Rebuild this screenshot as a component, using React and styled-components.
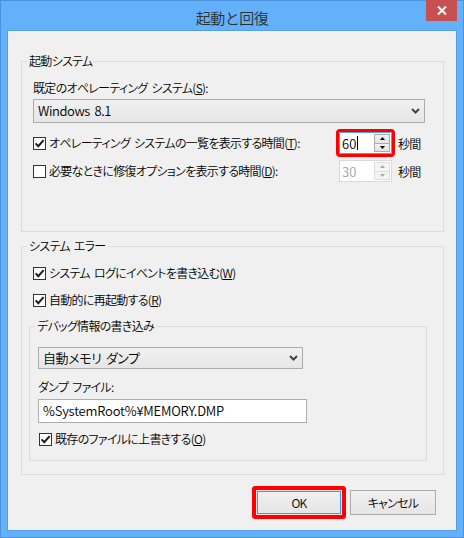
import styled, { createGlobalStyle } from 'styled-components';

const GlobalStyle = createGlobalStyle`
  * {
    box-sizing: border-box;
  }
  body {
    margin: 0;
    background: #fff;
    font-family: 'Noto Sans CJK JP', 'Noto Sans', sans-serif;
    font-size: 12px;
    font-weight: 350;
    letter-spacing: -0.7px;
    word-spacing: 2px;
    font-feature-settings: 'palt' 1;
    color: #000;
  }
`;

const CheckMark = () => (
  <svg width="11" height="11" viewBox="0 0 11 11">
    <path d="M1.6 5.4 L4.3 8.2 L9.6 2.2" fill="none" stroke="#1c1c1c" strokeWidth="2" />
  </svg>
);

const Check = ({ checked }) => <CheckBox>{checked && <CheckMark />}</CheckBox>;

const Chevron = () => (
  <svg width="9" height="6" viewBox="0 0 9 6">
    <path d="M1 1 L4.5 4.5 L8 1" fill="none" stroke="#444" strokeWidth="2" />
  </svg>
);

const Arrow = ({ down, disabled }) => (
  <svg width="5" height="3" viewBox="0 0 5 3">
    <polygon
      points={down ? '0,0 5,0 2.5,3' : '0,3 5,3 2.5,0'}
      fill={disabled ? '#a8a8a8' : '#000'}
    />
  </svg>
);

const Spinner = ({ value, focused, disabled }) => (
  <SpinBox focused={focused} disabled={disabled}>
    <SpinValue disabled={disabled}>
      {value}
      {focused && <Caret />}
    </SpinValue>
    <SpinButtons>
      <SpinButton disabled={disabled}>
        <Arrow disabled={disabled} />
      </SpinButton>
      <SpinButton disabled={disabled}>
        <Arrow down disabled={disabled} />
      </SpinButton>
    </SpinButtons>
  </SpinBox>
);

const App = () => {
  return (
    <>
      <GlobalStyle />
      <Window>
        <TitleBar>
          <Title>起動と回復</Title>
          <CloseButton>
            <svg width="10" height="9" viewBox="0 0 10 9">
              <path d="M1 0.5 L9 8.5 M9 0.5 L1 8.5" stroke="#fff" strokeWidth="2" />
            </svg>
          </CloseButton>
        </TitleBar>
        <Frame>
          <Client>
            <Group top={30} pad="18px 18px 49px 11px">
              <Caption>起動システム</Caption>
              <FieldLabel>
                既定のオペレーティング システム(<u>S</u>):
              </FieldLabel>
              <Combo height={24} mt={3}>
                <span>Windows 8.1</span>
                <Chevron />
              </Combo>
              <TimeRow mt={9}>
                <Check checked />
                <RowText>
                  オペレーティング システムの一覧を表示する時間(<u>T</u>):
                </RowText>
                <Spinner value="60" focused />
                <Unit>秒間</Unit>
              </TimeRow>
              <TimeRow mt={6}>
                <Check />
                <RowText>
                  必要なときに修復オプションを表示する時間(<u>D</u>):
                </RowText>
                <Spinner value="30" disabled />
                <Unit>秒間</Unit>
              </TimeRow>
            </Group>

            <Group top={14} pad="17px 16px 13px 7px">
              <Caption>システム エラー</Caption>
              <CheckRow indent={4}>
                <Check checked />
                <RowText>
                  システム ログにイベントを書き込む(<u>W</u>)
                </RowText>
              </CheckRow>
              <CheckRow indent={4} mt={9}>
                <Check checked />
                <RowText>
                  自動的に再起動する(<u>R</u>)
                </RowText>
              </CheckRow>

              <Group top={17} pad="20px 8px 12px 8px">
                <Caption>デバッグ情報の書き込み</Caption>
                <Combo height={22} width={265}>
                  <span>自動メモリ ダンプ</span>
                  <Chevron />
                </Combo>
                <FieldLabel mt={10}>ダンプ ファイル:</FieldLabel>
                <TextBox>%SystemRoot%¥MEMORY.DMP</TextBox>
                <CheckRow indent={1} mt={7}>
                  <Check checked />
                  <RowText>
                    既存のファイルに上書きする(<u>O</u>)
                  </RowText>
                </CheckRow>
              </Group>
            </Group>

            <ButtonBar>
              <Button primary>OK</Button>
              <Button>キャンセル</Button>
            </ButtonBar>
          </Client>
        </Frame>
      </Window>
    </>
  );
};

const Window = styled.div`
  width: 464px;
  height: 538px;
  background: #63b1fa;
  border: 1px solid #4b93dc;
  display: flex;
  flex-direction: column;
`;

const TitleBar = styled.div`
  position: relative;
  height: 29px;
  display: flex;
  justify-content: center;
  align-items: center;
  padding-top: 3px;
`;

const Title = styled.span`
  font-size: 15px;
  letter-spacing: -0.5px;
  color: #2e2e2e;
  font-feature-settings: normal;
`;

const CloseButton = styled.div`
  position: absolute;
  top: -1px;
  right: 6px;
  width: 31px;
  height: 21px;
  background: #c75050;
  display: flex;
  align-items: center;
  justify-content: center;
`;

const Frame = styled.div`
  flex: 1;
  padding: 0 6px 6px;
  display: flex;
`;

const Client = styled.div`
  flex: 1;
  background: #f0f0f0;
  border: 1px solid #539fe9;
  padding: 0 12px 0 13px;
  display: flex;
  flex-direction: column;
`;

const Group = styled.div`
  position: relative;
  border: 1px solid #dcdcdc;
  margin-top: ${(props) => props.top}px;
  padding: ${(props) => props.pad};
  display: flex;
  flex-direction: column;
`;

const Caption = styled.span`
  position: absolute;
  top: -9px;
  left: 5px;
  padding: 0 2px;
  line-height: 16px;
  background: #f0f0f0;
`;

const FieldLabel = styled.div`
  line-height: 16px;
  margin-top: ${(props) => props.mt || 0}px;
  white-space: nowrap;
`;

const Combo = styled.div`
  height: ${(props) => props.height}px;
  width: ${(props) => (props.width ? `${props.width}px` : '100%')};
  margin-top: ${(props) => props.mt || 0}px;
  border: 1px solid #acacac;
  background: linear-gradient(#f1f1f1, #e6e6e6);
  display: flex;
  align-items: center;
  justify-content: space-between;
  padding: 0 4px 1px 4px;
  font-size: 13px;
  letter-spacing: -0.4px;

  & svg {
    margin-top: 1px;
  }
`;

const TimeRow = styled.div`
  height: 22px;
  margin-top: ${(props) => props.mt || 0}px;
  display: flex;
  align-items: center;
`;

const CheckRow = styled.div`
  height: 18px;
  margin-top: ${(props) => props.mt || 0}px;
  margin-left: ${(props) => props.indent || 0}px;
  display: flex;
  align-items: center;
`;

const CheckBox = styled.div`
  width: 13px;
  height: 13px;
  flex: none;
  border: 1px solid #333;
  background: #fff;
  display: flex;
  align-items: center;
  justify-content: center;
  margin-top: 1px;
`;

const RowText = styled.span`
  margin-left: 3px;
  flex: 1;
  white-space: nowrap;
  line-height: 16px;
`;

const SpinBox = styled.div`
  width: 53px;
  height: 22px;
  flex: none;
  background: #fff;
  border: 1px solid
    ${(props) => (props.focused ? '#5a9fe4' : props.disabled ? '#d9d9d9' : '#abadb3')};
  display: flex;
  border-radius: ${(props) => (props.focused ? '1px' : '0')};
  outline: ${(props) => (props.focused ? '3px solid #ff0000' : 'none')};
`;

const SpinValue = styled.div`
  flex: 1;
  display: flex;
  align-items: center;
  padding-left: 2px;
  font-size: 13px;
  letter-spacing: 0;
  color: ${(props) => (props.disabled ? '#a0a0a0' : '#000')};
`;

const Caret = styled.span`
  width: 1px;
  height: 14px;
  background: #000;
  margin-left: 1px;
`;

const SpinButtons = styled.div`
  width: 16px;
  margin: 1px 1px 1px 0;
  display: flex;
  flex-direction: column;
`;

const SpinButton = styled.div`
  flex: 1;
  border: 1px solid ${(props) => (props.disabled ? '#dedede' : '#acacac')};
  background: ${(props) =>
    props.disabled ? '#f4f4f4' : 'linear-gradient(#f2f2f2, #e4e4e4)'};
  display: flex;
  align-items: center;
  justify-content: center;

  & + & {
    margin-top: -1px;
  }
`;

const Unit = styled.span`
  margin-left: 6px;
  margin-right: 3px;
  width: 24px;
  white-space: nowrap;
`;

const TextBox = styled.div`
  width: 269px;
  height: 24px;
  margin-top: 4px;
  background: #fff;
  border: 1px solid #abadb3;
  padding: 0 4px 1px;
  display: flex;
  align-items: center;
  font-size: 13px;
  letter-spacing: -0.2px;
`;

const ButtonBar = styled.div`
  margin-top: 15px;
  margin-right: 8px;
  display: flex;
  justify-content: flex-end;
  gap: 8px;
`;

const Button = styled.div`
  width: 86px;
  height: 25px;
  border: 1px solid ${(props) => (props.primary ? '#e6e6e6' : '#acacac')};
  background: linear-gradient(#f0f0f0, #e5e5e5);
  display: flex;
  align-items: center;
  justify-content: center;
  padding-bottom: 1px;
  box-shadow: ${(props) =>
    props.primary ? 'inset 0 0 0 1px #3399ff, 0 0 0 4px #ff0000' : 'none'};
  border-radius: ${(props) => (props.primary ? '1px' : '0')};
`;

export default App;
